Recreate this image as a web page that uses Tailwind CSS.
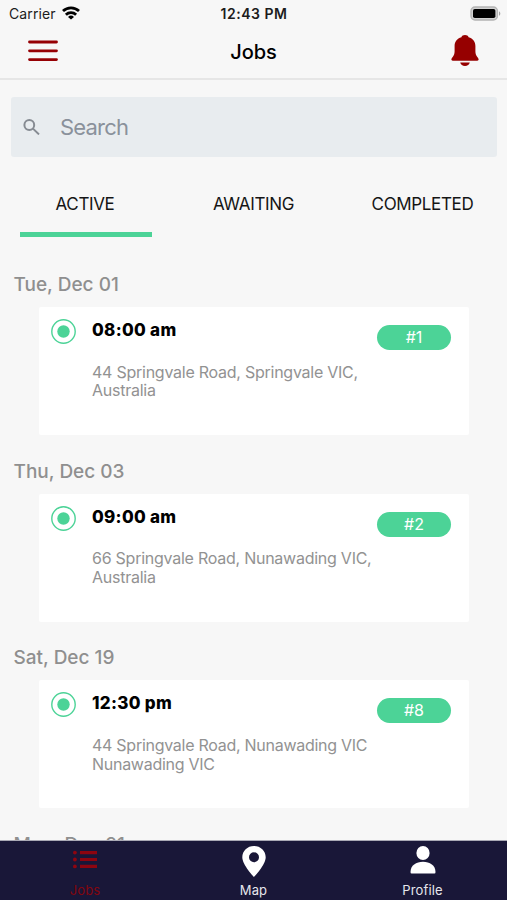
<!DOCTYPE html>
<html lang="en">
<head>
    <meta charset="UTF-8">
    <meta name="viewport" content="width=device-width, initial-scale=1.0">
    <title>Jobs</title>
    <script src="https://cdn.jsdelivr.net/npm/@tailwindcss/browser@4"></script>
</head>
<body class="bg-[#f7f7f7] font-['Inter',sans-serif] text-black">
    <div class="flex h-[900px] w-[507px] flex-col overflow-hidden">

        <!-- Status bar -->
        <div class="grid h-7 shrink-0 grid-cols-3 items-center pl-[9px] pr-1.5 text-[#1c1c1c]">
            <div class="flex items-center gap-1.5">
                <span class="text-[14px] leading-7 tracking-[0.1px]">Carrier</span>
                <svg class="-mt-0.5 h-[14px] w-[18px]" viewBox="0 0 18 14" fill="none" stroke="#000" stroke-width="2.8">
                    <path d="M1 5.1a11.6 11.6 0 0 1 16 0"/>
                    <path d="M3.9 8.7a7.4 7.4 0 0 1 10.2 0"/>
                    <path d="M9 13.6L6 10.9a4.3 4.3 0 0 1 6 0z" fill="#000" stroke="none"/>
                </svg>
            </div>
            <span class="-ml-0.5 text-center text-[14px] font-semibold leading-7 tracking-[0.5px]">12:43 PM</span>
            <svg class="-mt-0.5 h-[15px] w-[31px] justify-self-end" viewBox="0 0 31 15">
                <rect x="1" y="1" width="26.4" height="13" rx="4" fill="#d2d2d2" stroke="#b4b4b4" stroke-width="1.4"/>
                <rect x="3" y="3" width="22.4" height="9" rx="1.8" fill="#000"/>
                <path d="M29 5.2c1.8.8 1.8 3.8 0 4.6z" fill="#a5a5a5"/>
            </svg>
        </div>

        <!-- Header -->
        <header class="grid h-[52px] shrink-0 grid-cols-3 items-start border-b-2 border-[#e6e6e6] px-7">
            <svg class="mt-3 h-[22px] w-[30px]" viewBox="0 0 30 22" stroke="#960004" stroke-width="2.8" stroke-linecap="round">
                <path d="M1.5 2h27M1.5 10.8h27M1.5 19.6h27"/>
            </svg>
            <h1 class="mt-2.5 text-center text-[20px] font-medium leading-7">Jobs</h1>
            <svg class="mt-[7px] h-[31px] w-[28px] justify-self-end" viewBox="0 0 28 31" fill="#960000">
                <path d="M14 0c-1.8 0-3.2.9-3.6 2.2C6 3.4 3.6 6.7 3.6 11v5.3c0 2.6-.7 4.2-1.9 5.7C.7 23.3.4 24 .4 24.6c0 .7.5 1.2 1.3 1.2h24.6c.8 0 1.3-.5 1.3-1.2 0-.6-.3-1.3-1.3-2.6-1.2-1.5-1.9-3.1-1.9-5.7V11c0-4.3-2.4-7.6-6.8-8.8C17.2.9 15.800 0 14 0z"/>
                <path d="M9.200 27.600h9.600c-.6 2.100-2.300 3.400-4.800 3.400s-4.200-1.300-4.800-3.400z"/>
            </svg>
        </header>

        <!-- Search -->
        <div class="mt-[17px] mr-2.5 ml-[11px] flex h-[60px] shrink-0 items-center rounded-[3px] bg-[#e8ecef] pl-3 text-[#8a919b]">
            <svg class="-mt-px h-4 w-[17px]" viewBox="0 0 17 16" fill="none" stroke="#868b92" stroke-width="2">
                <circle cx="6.3" cy="6" r="4.9"/>
                <path d="M10 9.6l6 5.8"/>
            </svg>
            <span class="ml-5 text-[22px] leading-[60px] tracking-[-0.8px]">Search</span>
        </div>

        <!-- Tabs -->
        <nav class="mt-[25px] grid h-[55px] shrink-0 grid-cols-3 text-center text-[17px] leading-[44px] tracking-[-0.35px] text-[#151515]">
            <div class="flex flex-col items-center">
                <span class="ml-px h-[42px]">ACTIVE</span>
                <span class="mt-2 ml-0.5 h-[5px] w-[132px] bg-[#4cd397]"></span>
            </div>
            <span>AWAITING</span>
            <span>COMPLETED</span>
        </nav>

        <!-- Job list -->
        <main class="min-h-0 flex-1 overflow-hidden pt-[34px]">
            <section class="h-[186.7px]">
                <h2 class="h-9 pl-[13.5px] text-[19px] font-medium leading-[28px] text-[#8f8f8f]">Tue, Dec 01</h2>
                <div class="mr-[38px] ml-[39px] flex h-[128px] rounded-[2px] bg-white pl-3 pr-[18px]">
                    <svg class="mt-3 h-[25px] w-[25px] shrink-0" viewBox="0 0 25 25">
                        <circle cx="12.5" cy="12.5" r="11.7" fill="none" stroke="#4cd397" stroke-width="1.4"/>
                        <circle cx="12.5" cy="12.5" r="6.2" fill="#4cd397"/>
                    </svg>
                    <div class="ml-4 flex-1">
                        <h3 class="mt-[11px] text-[17px] font-extrabold leading-6 tracking-[0.3px]">08:00 am</h3>
                        <p class="mt-[20.5px] text-[16px] leading-[18.7px] tracking-[-0.25px] whitespace-nowrap text-[#929292]">44 Springvale Road, Springvale VIC,<br>Australia</p>
                    </div>
                    <span class="mt-[18px] h-[25px] w-[74px] rounded-full bg-[#4cd397] text-center text-[16px] leading-[25px] text-white">#1</span>
                </div>
            </section>

            <section class="h-[186.7px]">
                <h2 class="h-9 pl-[13.5px] text-[19px] font-medium leading-[28px] text-[#8f8f8f]">Thu, Dec 03</h2>
                <div class="mr-[38px] ml-[39px] flex h-[128px] rounded-[2px] bg-white pl-3 pr-[18px]">
                    <svg class="mt-3 h-[25px] w-[25px] shrink-0" viewBox="0 0 25 25">
                        <circle cx="12.5" cy="12.5" r="11.7" fill="none" stroke="#4cd397" stroke-width="1.4"/>
                        <circle cx="12.5" cy="12.5" r="6.2" fill="#4cd397"/>
                    </svg>
                    <div class="ml-4 flex-1">
                        <h3 class="mt-[11px] text-[17px] font-extrabold leading-6 tracking-[0.3px]">09:00 am</h3>
                        <p class="mt-[20.5px] text-[16px] leading-[18.7px] tracking-[-0.25px] whitespace-nowrap text-[#929292]">66 Springvale Road, Nunawading VIC,<br>Australia</p>
                    </div>
                    <span class="mt-[18px] h-[25px] w-[74px] rounded-full bg-[#4cd397] text-center text-[16px] leading-[25px] text-white">#2</span>
                </div>
            </section>

            <section class="h-[186.7px]">
                <h2 class="h-9 pl-[13.5px] text-[19px] font-medium leading-[28px] text-[#8f8f8f]">Sat, Dec 19</h2>
                <div class="mr-[38px] ml-[39px] flex h-[128px] rounded-[2px] bg-white pl-3 pr-[18px]">
                    <svg class="mt-3 h-[25px] w-[25px] shrink-0" viewBox="0 0 25 25">
                        <circle cx="12.5" cy="12.5" r="11.7" fill="none" stroke="#4cd397" stroke-width="1.4"/>
                        <circle cx="12.5" cy="12.5" r="6.2" fill="#4cd397"/>
                    </svg>
                    <div class="ml-4 flex-1">
                        <h3 class="mt-[11px] text-[17px] font-extrabold leading-6 tracking-[0.3px]">12:30 pm</h3>
                        <p class="mt-[20.5px] text-[16px] leading-[18.7px] tracking-[-0.27px] whitespace-nowrap text-[#929292]">44 Springvale Road, Nunawading VIC<br>Nunawading VIC</p>
                    </div>
                    <span class="mt-[18px] h-[25px] w-[74px] rounded-full bg-[#4cd397] text-center text-[16px] leading-[25px] text-white">#8</span>
                </div>
            </section>

            <section>
                <h2 class="h-9 pl-[13.5px] text-[19px] font-medium leading-[27px] text-[#8f8f8f]">Mon, Dec 21</h2>
            </section>
        </main>

        <!-- Bottom navigation -->
        <footer class="grid h-[60px] shrink-0 grid-cols-3 border-t border-[#a9a9b5] bg-[#191738] text-center text-[13px] leading-4 tracking-[0.15px] text-[#e6e6ec]">
            <div class="flex flex-col items-center text-[#83060f]">
                <svg class="mt-[9px] h-[19px] w-6" viewBox="0 0 24 19" fill="#8e0510">
                    <path d="M7 1h17v3.2H7zM7 7.9h17v3.2H7zM7 14.8h17V18H7z"/>
                    <circle cx="1.9" cy="2.6" r="1.9"/>
                    <circle cx="1.9" cy="9.5" r="1.9"/>
                    <circle cx="1.9" cy="16.4" r="1.9"/>
                </svg>
                <span class="mt-[13px] ml-px">Jobs</span>
            </div>
            <div class="flex flex-col items-center">
                <svg class="mt-[5px] h-[31px] w-6" viewBox="0 0 24 31" fill="#fff">
                    <path fill-rule="evenodd" d="M12 0C5.4 0 .3 4.9.3 11.3.3 19 12 31 12 31s11.7-12 11.7-19.7C23.7 4.9 18.6 0 12 0zm0 6.3a5 5 0 1 1 0 10 5 5 0 0 1 0-10z"/>
                </svg>
                <span class="mt-[5px]">Map</span>
            </div>
            <div class="flex flex-col items-center">
                <svg class="mt-[5px] h-7 w-[26px]" viewBox="0 0 26 28" fill="#fff">
                    <ellipse cx="13" cy="7" rx="6.6" ry="7"/>
                    <path d="M1.500 27.500Q.5 27.500.5 26C.5 19.500 6.200 15.800 13 15.800S25.500 19.500 25.500 26q0 1.500-1 1.500z"/>
                </svg>
                <span class="mt-2">Profile</span>
            </div>
        </footer>
    </div>
</body>
</html>
